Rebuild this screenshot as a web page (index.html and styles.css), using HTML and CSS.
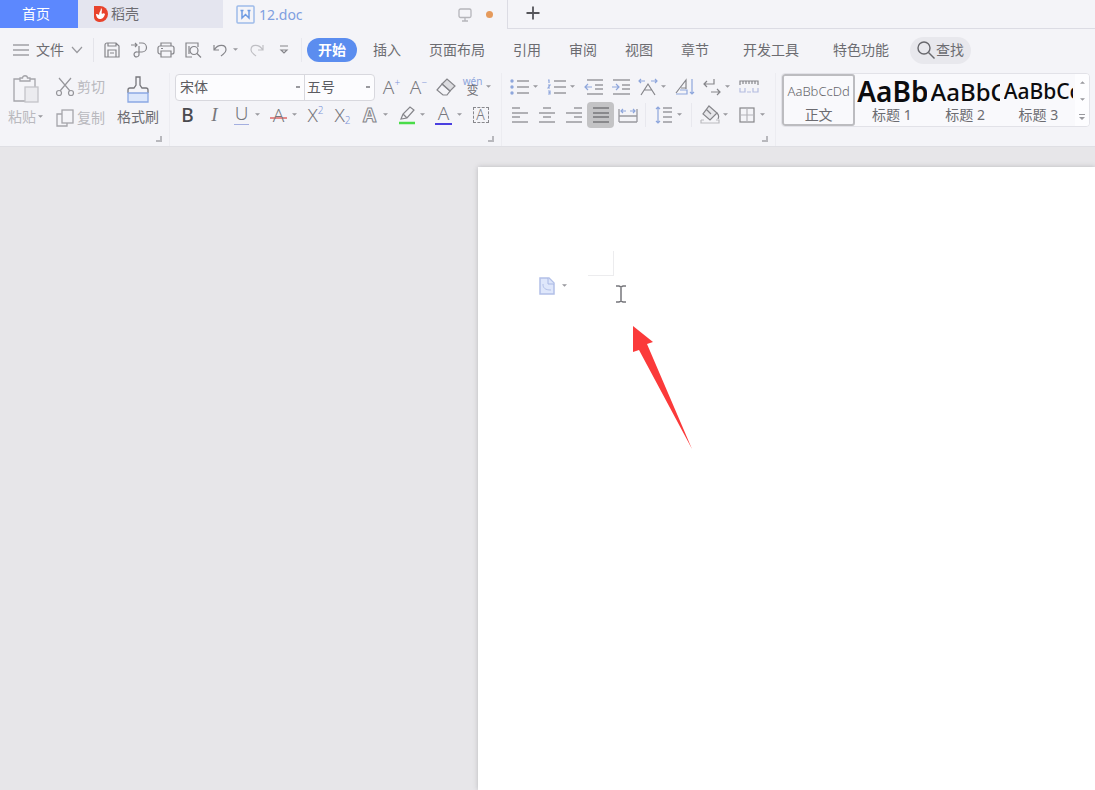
FILE: index.html
```html
<!DOCTYPE html>
<html lang="zh-CN">
<head>
<meta charset="utf-8">
<title>12.doc</title>
<link rel="stylesheet" href="styles.css">
</head>
<body>
<div class="app">
  <nav class="tabs" aria-label="文档标签">
    <button class="tab tab-home">首页</button>
    <button class="tab tab-store">
      <svg width="16" height="18" viewBox="0 0 16 18"><path d="M1 1h6a8 8 0 0 1 0 16H6a5 5 0 0 1-5-5z" fill="#e8432c"/><path d="M8 3c2 2 0 4 1 6 1-1 2-1 3 0-1 4-3 5-5 5s-4-2-4-5c1 0 2 0 3 1 0-3 2-4 2-7z" fill="#fff"/></svg>
      <span>稻壳</span>
    </button>
    <button class="tab tab-doc">
      <svg width="19" height="19" viewBox="0 0 19 19" fill="none" stroke="#9dbbe9" stroke-width="1.500"><rect x="1" y="1" width="17" height="17" rx="1"/><path d="M4.500 5.500h3M11.500 5.500h3M6 5.500v7.500l3.500-3.500 3.500 3.500V5.500" stroke="#6d9be2"/></svg>
      <span class="doc-name">12.doc</span>
      <svg width="14" height="14" viewBox="0 0 14 14" fill="none" stroke="#b5b5ba" stroke-width="1.300"><rect x="1" y="1" width="12" height="8.500" rx="1.500"/><path d="M7 9.500V13M4 13h6"/></svg>
      <span class="dot"></span>
    </button>
    <button class="tab-add" aria-label="新建"><svg width="14" height="14" viewBox="0 0 14 14" stroke="#55555a" stroke-width="1.800"><path d="M7 .5v13M.5 7h13"/></svg></button>
  </nav>

  <div class="menubar">
    <button class="file-btn">
      <svg width="16" height="12" viewBox="0 0 16 12" stroke="#77777c" stroke-width="1.200"><path d="M0 1h16M0 6h16M0 11h16"/></svg>
      <span>文件</span>
      <svg width="12" height="8" viewBox="0 0 12 8" fill="none" stroke="#99999e" stroke-width="1.200"><path d="M1 1l5 5.500L11 1"/></svg>
    </button>
    <div class="quick">
      <button aria-label="保存"><svg width="18" height="18" viewBox="0 0 18 18" class="ln"><path d="M2 4a2 2 0 0 1 2-2h9l3 3v11H2zM5 2v3h8V2M5 16V9h8v7M7 12h4"/></svg></button>
      <button aria-label="输出"><svg width="18" height="18" viewBox="0 0 18 18" class="ln"><path d="M1 4h6M5 2l2 2-2 2M9 2h3a4 4 0 0 1 0 9H7a2.500 2.500 0 1 0 2 2V5"/></svg></button>
      <button aria-label="打印"><svg width="18" height="18" viewBox="0 0 18 18" class="ln"><path d="M4 5V2h10v3M4 13H3a2 2 0 0 1-2-2V7a2 2 0 0 1 2-2h12a2 2 0 0 1 2 2v4a2 2 0 0 1-2 2h-1M4 10h10v6H4zM4 7.500h2"/></svg></button>
      <button aria-label="打印预览"><svg width="18" height="18" viewBox="0 0 18 18" class="ln"><path d="M8 16H2V2h12v4"/><circle cx="10" cy="9.500" r="4"/><path d="M13 12.500l4 4M5 5v8"/></svg></button>
      <button aria-label="撤销"><svg width="18" height="18" viewBox="0 0 18 18" class="ln"><path d="M3 4v5h5M3.500 8.500C7 3 15 3 15 9c0 3-3 4-5 6"/></svg></button>
      <svg class="caret" viewBox="0 0 6 4"><path d="M0 0h6L3 3z"/></svg>
      <button aria-label="恢复"><svg width="18" height="18" viewBox="0 0 18 18" class="ln pale"><path d="M15 4v5h-5M14.500 8.500C11 3 3 3 3 9c0 3 3 4 5 6"/></svg></button>
      <button class="more" aria-label="更多"><svg width="10" height="10" viewBox="0 0 10 10" class="ln"><path d="M1 1h8M2 5l3 3 3-3z"/></svg></button>
    </div>
    <div class="menus">
      <button class="menu active">开始</button>
      <button class="menu">插入</button>
      <button class="menu">页面布局</button>
      <button class="menu">引用</button>
      <button class="menu">审阅</button>
      <button class="menu">视图</button>
      <button class="menu">章节</button>
      <button class="menu wide">开发工具</button>
      <button class="menu wide">特色功能</button>
      <button class="search">
        <svg width="18" height="18" viewBox="0 0 18 18" fill="none" stroke="#68686d" stroke-width="1.400"><circle cx="7" cy="7" r="6"/><path d="M11.500 11.500l6 6"/></svg>
        <span>查找</span>
      </button>
    </div>
  </div>

  <div class="ribbon">
    <section class="group clipboard">
      <button class="big faded">
        <svg width="28" height="30" viewBox="0 0 28 30" fill="none" stroke="#a5a5aa" stroke-width="1.300"><path d="M8 4H2v22h11M18 4h5v8"/><path d="M8 6V3h2.500c0-3 5-3 5 0H18v3z"/><rect x="13" y="12" width="13" height="15" fill="#ebebef" stroke="#c4c4c8"/></svg>
        <span class="label">粘贴<svg class="caret" viewBox="0 0 6 4"><path d="M0 0h6L3 3z"/></svg></span>
      </button>
      <div class="stack">
        <button class="faded"><svg width="20" height="20" viewBox="0 0 20 20" fill="none" stroke="#96969b" stroke-width="1.200"><path d="M4 1l11 13M16 1L5 14"/><circle cx="4" cy="16" r="2.500"/><circle cx="16" cy="16" r="2.500"/></svg><span>剪切</span></button>
        <button class="faded"><svg width="20" height="20" viewBox="0 0 20 20" fill="none" stroke="#a5a5aa" stroke-width="1.300"><rect x="7" y="2" width="11" height="13"/><path d="M7 6H2v12h10v-3"/></svg><span>复制</span></button>
      </div>
      <button class="big">
        <svg width="24" height="30" viewBox="0 0 24 30" fill="none" stroke="#77777c" stroke-width="1.300"><path d="M2 18v-3a2 2 0 0 1 2-2h4l2-3V2h4v8l2 3h4a2 2 0 0 1 2 2v3"/><path d="M2 18h20v9H2z" fill="#dce7fb" stroke="#8aa8e4"/></svg>
        <span class="label">格式刷</span>
      </button>
      <span class="launcher"></span>
    </section>

    <section class="group font">
      <div class="row">
        <div class="combos">
          <select class="family" aria-label="字体"><option>宋体</option></select>
          <select class="size" aria-label="字号"><option>五号</option></select>
        </div>
        <button class="tool glyph" aria-label="增大字号">A<sup>+</sup></button>
        <button class="tool glyph" aria-label="减小字号">A<sup>−</sup></button>
        <button class="tool" aria-label="清除格式"><svg width="20" height="18" viewBox="0 0 20 18" class="ln"><path d="M6 6l5-5 8 7-5 5z" fill="#dcdce0"/><path d="M6 6l8 7-3 4H7l-6-5z"/></svg></button>
        <button class="tool pinyin" aria-label="拼音指南"><span class="wen">wén</span><span class="bian">变</span></button>
        <svg class="caret" viewBox="0 0 6 4"><path d="M0 0h6L3 3z"/></svg>
      </div>
      <div class="row">
        <button class="tool glyph bold">B</button>
        <button class="tool glyph italic">I</button>
        <button class="tool glyph"><span class="under">U</span></button>
        <svg class="caret" viewBox="0 0 6 4"><path d="M0 0h6L3 3z"/></svg>
        <button class="tool glyph"><span class="strike">A</span></button>
        <svg class="caret" viewBox="0 0 6 4"><path d="M0 0h6L3 3z"/></svg>
        <button class="tool glyph">X<sup>2</sup></button>
        <button class="tool glyph">X<sub>2</sub></button>
        <button class="tool glyph outlined">A</button>
        <svg class="caret" viewBox="0 0 6 4"><path d="M0 0h6L3 3z"/></svg>
        <button class="tool" aria-label="突出显示"><svg width="20" height="20" viewBox="0 0 20 20" class="ln"><path d="M4 14l2-5 7-7 4 3-7 8zM6 9l4 4"/><path d="M2 18h16" stroke="#49dc49" stroke-width="2.500"/></svg></button>
        <svg class="caret" viewBox="0 0 6 4"><path d="M0 0h6L3 3z"/></svg>
        <button class="tool glyph"><span class="colored">A</span></button>
        <svg class="caret" viewBox="0 0 6 4"><path d="M0 0h6L3 3z"/></svg>
        <button class="tool glyph"><span class="shaded">A</span></button>
      </div>
      <span class="launcher"></span>
    </section>

    <section class="group para">
      <div class="row">
        <button class="tool" aria-label="项目符号"><svg width="20" height="16" viewBox="0 0 20 16" class="bars"><path d="M7 2h12M7 8h12M7 14h12"/><g fill="#8ea6dc" stroke="none"><circle cx="2" cy="2" r="1.700"/><circle cx="2" cy="8" r="1.700"/><circle cx="2" cy="14" r="1.700"/></g></svg></button>
        <svg class="caret" viewBox="0 0 6 4"><path d="M0 0h6L3 3z"/></svg>
        <button class="tool" aria-label="编号"><svg width="20" height="16" viewBox="0 0 20 16" class="bars"><path d="M7 2h12M7 8h12M7 14h12"/><path class="bl" d="M1 1h1v3M1 6h2L1 9h2M1 12h2v1.500H1.500 3V15H1"/></svg></button>
        <svg class="caret" viewBox="0 0 6 4"><path d="M0 0h6L3 3z"/></svg>
        <button class="tool" aria-label="减少缩进"><svg width="20" height="18" viewBox="0 0 20 18" class="bars"><path d="M3 2h16M11 7h8M11 11h8M3 16h16"/><path class="bl" d="M1 9h7M4 6L1 9l3 3"/></svg></button>
        <button class="tool" aria-label="增加缩进"><svg width="20" height="18" viewBox="0 0 20 18" class="bars"><path d="M2 2h17M11 7h8M11 11h8M2 16h17"/><path class="bl" d="M1 9h7M5 6l3 3-3 3"/></svg></button>
        <button class="tool" aria-label="中文版式"><svg width="20" height="18" viewBox="0 0 20 18" class="ln"><path d="M3 17L10 6l7 11M6 12h8"/><path class="bl" d="M1 3h6M3 1L1 3l2 2M13 3h6M17 1l2 2-2 2"/></svg></button>
        <svg class="caret" viewBox="0 0 6 4"><path d="M0 0h6L3 3z"/></svg>
        <button class="tool" aria-label="排序"><svg width="20" height="18" viewBox="0 0 20 18" class="ln"><path class="bl" d="M17 1v15M15 14l2 2 2-2"/><path d="M1 15L11 2v9M6 10h5"/><path class="bl" d="M1 16h11v-4H5"/></svg></button>
        <button class="tool" aria-label="显示标记"><svg width="20" height="18" viewBox="0 0 20 18" class="ln"><path d="M12 1v5H2M5 3L2 6l3 3M9 14h9M15 11l3 3-3 3"/></svg></button>
        <svg class="caret" viewBox="0 0 6 4"><path d="M0 0h6L3 3z"/></svg>
        <button class="tool" aria-label="制表位"><svg width="20" height="16" viewBox="0 0 20 16" class="ln"><path d="M1 6V2h18v4M4 2v3M7 2v3M10 2v3M13 2v3M16 2v3"/><path d="M1 9v4h5V9M8 13h4M14 9v4h5V9" stroke="#b4bce0"/></svg></button>
      </div>
      <div class="row">
        <button class="tool" aria-label="左对齐"><svg width="18" height="16" viewBox="0 0 18 16" class="bars"><path d="M1 1h8M1 6h16M1 10h8M1 15h16"/></svg></button>
        <button class="tool" aria-label="居中"><svg width="18" height="16" viewBox="0 0 18 16" class="bars"><path d="M5 1h8M1 6h16M5 10h8M1 15h16"/></svg></button>
        <button class="tool" aria-label="右对齐"><svg width="18" height="16" viewBox="0 0 18 16" class="bars"><path d="M9 1h8M1 6h16M9 10h8M1 15h16"/></svg></button>
        <button class="tool on" aria-label="两端对齐"><svg width="18" height="16" viewBox="0 0 18 16" class="bars"><path d="M1 1h16M1 6h16M1 10h16M1 15h16" stroke="#77777a"/></svg></button>
        <button class="tool" aria-label="分散对齐"><svg width="20" height="16" viewBox="0 0 20 16" class="bars"><path d="M1 2v13M19 2v13M1 15h18M1 9h18"/><path class="bl" d="M3 4h5M5 2L3 4l2 2M12 4h5M15 2l2 2-2 2"/></svg></button>
        <span class="sep"></span>
        <button class="tool" aria-label="行距"><svg width="18" height="18" viewBox="0 0 18 18" class="bars"><path d="M8 2h9M8 6h9M8 11h9M8 16h9"/><path class="bl" d="M3 1v16M1 3l2-2 2 2M1 15l2 2 2-2"/></svg></button>
        <svg class="caret" viewBox="0 0 6 4"><path d="M0 0h6L3 3z"/></svg>
        <span class="sep"></span>
        <button class="tool" aria-label="底纹"><svg width="20" height="20" viewBox="0 0 20 20" class="ln"><path d="M9 1l8 7-7 7-7-6zM6 4l5 5" fill="#e6e6ea"/><path d="M17 8c2 2 2 4 1 6"/><path d="M1 15h3M16 15h3v3H1v-3" stroke="#bbbbc0"/></svg></button>
        <svg class="caret" viewBox="0 0 6 4"><path d="M0 0h6L3 3z"/></svg>
        <button class="tool" aria-label="边框"><svg width="16" height="16" viewBox="0 0 16 16" class="ln"><rect x="1" y="1" width="14" height="14"/><path d="M8 1v14M1 8h14" stroke="#b4b4b9"/></svg></button>
        <svg class="caret" viewBox="0 0 6 4"><path d="M0 0h6L3 3z"/></svg>
      </div>
      <span class="launcher"></span>
    </section>

    <section class="gallery">
      <button class="style chosen"><span class="sample normal">AaBbCcDd</span><span class="name">正文</span></button>
      <button class="style"><span class="sample h1">AaBb</span><span class="name">标题 1</span></button>
      <button class="style"><span class="sample h2">AaBbC</span><span class="name">标题 2</span></button>
      <button class="style"><span class="sample h3">AaBbCc</span><span class="name">标题 3</span></button>
      <div class="scroller">
        <button aria-label="上移"><svg class="caret" viewBox="0 0 6 4"><path d="M0 3h6L3 0z"/></svg></button>
        <button aria-label="下移"><svg class="caret" viewBox="0 0 6 4"><path d="M0 0h6L3 3z"/></svg></button>
        <button aria-label="展开"><svg width="6" height="7" viewBox="0 0 6 7" fill="#99999e"><path d="M0 0h6v1H0zM0 3h6L3 6z"/></svg></button>
      </div>
    </section>
  </div>

  <main class="workspace">
    <div class="page">
      <span class="margin-mark"></span>
      <button class="paste-options" aria-label="粘贴选项">
        <svg width="16" height="18" viewBox="0 0 16 18"><path d="M1 1h9l5 5v11H1z" fill="#dfe7fb" stroke="#b3c0e8" stroke-width="1.500"/><path d="M9 1v6h6" fill="#dde5fa" stroke="#a9b8e4"/><path d="M4 7c0 4 2 6 8 6" fill="none" stroke="#b3c0e8"/></svg>
        <svg class="caret" viewBox="0 0 6 4"><path d="M0 0h6L3 3z"/></svg>
      </button>
      <svg class="ibeam" width="12" height="18" viewBox="0 0 12 18" fill="none" stroke="#77777c" stroke-width="1.500"><path d="M1 1h3l2 1 2-1h3M1 17h3l2-1 2 1h3M6 2v14"/></svg>
      <svg class="arrow" width="60" height="124" viewBox="0 0 60 124"><path d="M0 0l20 16-6 2 45 105L6 24l-6 2z" fill="#fb3a3a"/></svg>
    </div>
  </main>
</div>
</body>
</html>
```

FILE: styles.css
```css
* { box-sizing: border-box; }

body {
  margin: 0;
  font-family: "Noto Sans", "Noto Sans CJK SC", sans-serif;
  font-size: 14px;
  line-height: 20px;
  color: #6c6c71;
}

button {
  display: flex;
  align-items: center;
  justify-content: center;
  padding: 0;
  border: 0;
  background: none;
  color: inherit;
  font: inherit;
  white-space: nowrap;
}

svg { flex: none; display: block; }

.app {
  display: flex;
  flex-direction: column;
  min-height: 100vh;
  background: #f4f4f8;
  overflow: hidden;
}

/* Document tabs */
.tabs { display: flex; height: 29px; background: #f4f4f8; }
.tab-home { width: 78px; padding-right: 6px; height: 28px; background: #5c88fe; color: #fff; }
.tab-store {
  width: 145px;
  height: 28px;
  padding-left: 15px;
  gap: 2px;
  justify-content: flex-start;
  background: #e4e5ef;
}
.tab-doc {
  width: 285px;
  padding: 0 14px 0 13px;
  gap: 4px;
  border-right: 1px solid #dcdce4;
  color: #7f9fe0;
}
.doc-name { flex: 1; text-align: left; }
.dot { width: 7px; height: 7px; margin-left: 10px; border-radius: 50%; background: #e59a5c; }
.tab-add { flex: 1; justify-content: flex-start; padding: 0 18px 3px; border-bottom: 1px solid #dcdce4; }

/* Menu row */
.menubar { display: flex; align-items: center; height: 42px; padding-left: 13px; }
.file-btn { gap: 7px; height: 24px; padding-right: 10px; border-right: 1px solid #e4e4ea; }
.quick { display: flex; align-items: center; padding-left: 4px; width: 208px; height: 24px; border-right: 1px solid #e8e8ee; }
.quick button { width: 27px; height: 24px; }
.ln { fill: none; stroke: #85858a; stroke-width: 1.2; }
.pale { stroke: #bfbfc4; }
.bars { fill: none; stroke: #99999e; stroke-width: 1.3; }
.bl { fill: none; stroke: #8ea6dc; stroke-width: 1.2; }
.caret { width: 5px; height: 4px; margin: 0 5px 0 0; fill: #99999e; }

.menus { display: flex; align-items: center; gap: 28px; padding-left: 5px; }
.active {
  width: 50px;
  height: 24px;
  margin-right: -12px;
  border-radius: 12px;
  background: #5b8def;
  color: #fff;
  font-weight: 700;
}
.wide { margin-left: 6px; }
.search { gap: 1px; width: 61px; height: 27px; margin-left: -7px; border-radius: 14px; background: #e8e8ed; }

/* Ribbon */
.ribbon {
  display: flex;
  height: 76px;
  padding-top: 2px;
  border-bottom: 1px solid #dfdfe4;
}
.group { position: relative; border-right: 1px solid #ececf1; }
.launcher {
  position: absolute;
  right: 7px;
  bottom: 4px;
  width: 6px;
  height: 6px;
  border: solid #b8b8bd;
  border-width: 0 2px 2px 0;
}
.row { display: flex; align-items: center; height: 28px; }
.tool { width: 27px; height: 26px; }
.on { border-radius: 4px; background: #c3c3c5; }
.sep { width: 1px; height: 24px; margin: 0 4px; background: #e8e8ee; }

.clipboard { display: flex; width: 170px; padding-left: 8px; }
.big { flex-direction: column; justify-content: flex-start; align-self: flex-start; padding-top: 2px; gap: 2px; }
.label { display: flex; align-items: center; }
.label .caret { margin: 0 0 0 2px; }
.faded { color: #b9b9be; }
.stack { display: flex; flex-direction: column; gap: 10px; margin: 3px 12px 0; }
.stack button { gap: 2px; height: 21px; }

.font { width: 332px; padding-left: 4px; }
.combos {
  display: flex;
  width: 200px;
  height: 27px;
  margin: 0 3px 0 1px;
  border: 1px solid #d8d8de;
  border-radius: 4px;
  background: #fcfcfe;
}
.combos select {
  appearance: none;
  border: 0;
  padding: 0 4px;
  font: inherit;
  color: #5c5c61;
  background: linear-gradient(#99999e, #99999e) no-repeat right 4px center / 4px 2px;
}
.family { width: 128px; }
.combos .size { flex: 1; border-left: 1px solid #d8d8de; padding: 0 2px; }

.glyph { font-size: 19px; font-weight: 300; color: #77777c; }
.glyph sup, .glyph sub { font-size: 10px; line-height: 10px; color: #7f95d8; }
.glyph sup { align-self: flex-start; margin-top: 3px; }
.glyph sub { align-self: flex-end; margin-bottom: 3px; }
.bold { font-weight: 500; color: #4a4a4f; }
.italic { font-family: "Liberation Serif", serif; font-style: italic; }
.under { height: 20px; padding: 0 1px; line-height: 17px; border-bottom: 1px solid #a4afe0; }
.strike { padding: 0 3px; background: linear-gradient(#e48a8a, #e48a8a) no-repeat center 12px / 100% 2px; }
.outlined { color: #f4f4f8; font-weight: 700; -webkit-text-stroke: 1px #85858a; }
.colored { height: 20px; width: 17px; line-height: 17px; border-bottom: 2px solid #4a3fe0; }
.shaded { width: 16px; height: 16px; border: 1px dashed #88888d; font-size: 14px; line-height: 14px; }
.pinyin { flex-direction: column; }
.wen { font-size: 10px; line-height: 8px; color: #8ea6dc; }
.bian { font-size: 12px; line-height: 12px; }

.para { width: 274px; padding-left: 4px; }

/* Style gallery */
.gallery {
  display: flex;
  flex: 1;
  height: 54px;
  margin: 0 5px;
  border: 1px solid #e2e2e8;
  border-radius: 4px;
  background: #f9f9fc;
  overflow: hidden;
}
.style {
  flex: 1;
  min-width: 0;
  flex-direction: column;
  border: 2px solid transparent;
  border-radius: 3px;
  overflow: hidden;
}
.chosen { border-color: #bcbcc0; }
.sample { display: block; width: 100%; height: 31px; line-height: 31px; overflow: hidden; text-align: left; color: #0c0c0e; }
.name { line-height: 18px; }
.normal { font-size: 13px; font-weight: 300; color: #66666b; text-align: center; }
.h1 { font-size: 28px; font-weight: 600; }
.h2 { font-size: 24px; font-weight: 500; }
.h3 { font-size: 21px; font-weight: 500; }
.scroller { display: flex; flex-direction: column; width: 14px; background: #fdfdff; }
.scroller button { flex: 1; }
.scroller .caret { margin: 0; }

/* Page area */
.workspace { flex: 1; display: flex; padding: 20px 0 0 478px; background: #e7e6e9; }
.page { position: relative; flex: 1; background: #fff; box-shadow: 0 0 5px #b8b8bc; }
.margin-mark {
  position: absolute;
  left: 110px;
  top: 84px;
  width: 26px;
  height: 25px;
  border: solid #ececee;
  border-width: 0 1px 1px 0;
}
.paste-options { position: absolute; left: 61px; top: 110px; gap: 7px; }
.ibeam { position: absolute; left: 137px; top: 118px; }
.arrow { position: absolute; left: 155px; top: 159px; }
```
